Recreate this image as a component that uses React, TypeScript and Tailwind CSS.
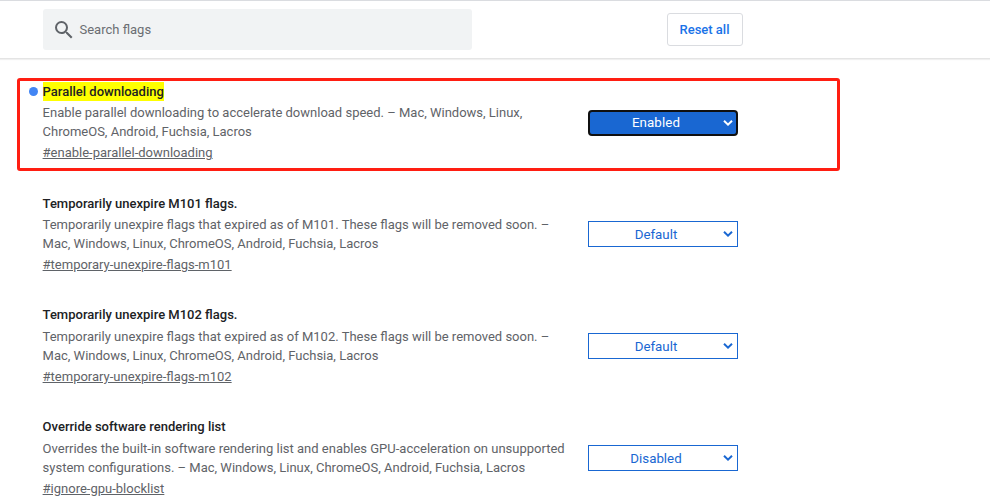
import React from "react";

type Flag = {
  title: string;
  lines: string[];
  link: string;
  value: string;
  active?: boolean;
};

const flags: Flag[] = [
  {
    title: "Parallel downloading",
    lines: [
      "Enable parallel downloading to accelerate download speed. – Mac, Windows, Linux,",
      "ChromeOS, Android, Fuchsia, Lacros",
    ],
    link: "#enable-parallel-downloading",
    value: "Enabled",
    active: true,
  },
  {
    title: "Temporarily unexpire M101 flags.",
    lines: [
      "Temporarily unexpire flags that expired as of M101. These flags will be removed soon. –",
      "Mac, Windows, Linux, ChromeOS, Android, Fuchsia, Lacros",
    ],
    link: "#temporary-unexpire-flags-m101",
    value: "Default",
  },
  {
    title: "Temporarily unexpire M102 flags.",
    lines: [
      "Temporarily unexpire flags that expired as of M102. These flags will be removed soon. –",
      "Mac, Windows, Linux, ChromeOS, Android, Fuchsia, Lacros",
    ],
    link: "#temporary-unexpire-flags-m102",
    value: "Default",
  },
  {
    title: "Override software rendering list",
    lines: [
      "Overrides the built-in software rendering list and enables GPU-acceleration on unsupported",
      "system configurations. – Mac, Windows, Linux, ChromeOS, Android, Fuchsia, Lacros",
    ],
    link: "#ignore-gpu-blocklist",
    value: "Disabled",
  },
];

function Select({ value, active }: { value: string; active?: boolean }) {
  return (
    <button
      className={
        active
          ? "flex h-[26px] w-[150px] items-center rounded-[4px] border-2 border-[#101010] bg-[#1967d2] pr-[3px] text-[13.333px] text-white"
          : "flex h-[26px] w-[150px] items-center border border-[#1967d2] bg-white pr-1 text-[13.333px] text-[#1967d2]"
      }
    >
      <span
        className={
          active
            ? "flex-1 pr-[1px] text-center leading-[22px] tracking-[0.1px]"
            : "flex-1 pt-px text-center leading-[23px]"
        }
      >
        {value}
      </span>
      <svg width="10" height="6" viewBox="0 0 10 6" fill="none" stroke="currentColor" strokeWidth="2">
        <path d="M1 .8 5 4.6 9 .8" />
      </svg>
    </button>
  );
}

function FlagRow({ flag }: { flag: Flag }) {
  return (
    <section className="flex h-[111.8px] text-[13px]">
      <div className="flex w-[42.6px] shrink-0 justify-end pt-[5.2px] pr-[4.6px]">
        {flag.active && <span className="size-[9px] rounded-full bg-[#4285f4]" />}
      </div>
      <div className="w-[545.4px] shrink-0 whitespace-nowrap text-[#5f6368]">
        <h3 className="flex h-[21.6px] font-medium leading-[19px] text-[#202124]">
          <span className={flag.active ? "h-[19px] bg-[#ffff00]" : "h-[19px]"}>{flag.title}</span>
        </h3>
        {flag.lines.map((line) => (
          <p key={line} className="h-[19px] leading-[19px]">{line}</p>
        ))}
        <a className="mt-[2px] block leading-[19px] underline">{flag.link}</a>
      </div>
      <div className="pt-[27.8px]">
        <Select value={flag.value} active={flag.active} />
      </div>
    </section>
  );
}

export default function App() {
  return (
    <div className="relative h-[501px] w-[990px] overflow-hidden bg-white font-['Roboto',sans-serif]">
      <header className="flex h-[59px] border-t border-b border-t-[#dadce0] border-b-[#e4e4e4] pl-[43px] shadow-[0_1px_1px_rgba(0,0,0,0.06)]">
        <div className="mt-2 flex h-[41px] w-[429px] items-center rounded-[3px] bg-[#f1f3f4] pl-[8.5px] text-[13px] text-[#6b6e72]">
          <svg width="24" height="24" viewBox="0 0 24 24" fill="#5f6368">
            <path d="M15.5 14h-.79l-.28-.27A6.471 6.471 0 0 0 16 9.5 6.5 6.5 0 1 0 9.5 16c1.61 0 3.09-.59 4.23-1.57l.27.28v.79l5 4.99L20.49 19l-4.99-5zm-6 0C7.01 14 5 11.99 5 9.5S7.01 5 9.5 5 14 7.01 14 9.5 11.99 14 9.5 14z" />
          </svg>
          <span className="ml-1">Search flags</span>
        </div>
        <button className="mt-3 ml-[195px] h-[33px] w-[76px] rounded-[3px] border border-[#dadce0] pr-px text-[13px] font-medium text-[#1a73e8]">
          Reset all
        </button>
      </header>
      <main className="pt-[22.8px]">
        {flags.map((flag) => (
          <FlagRow key={flag.title} flag={flag} />
        ))}
      </main>
      <div className="pointer-events-none absolute top-[78px] left-[17px] h-[93px] w-[823px] rounded-[3px] border-[3px] border-[#ff1e12]" />
    </div>
  );
}
